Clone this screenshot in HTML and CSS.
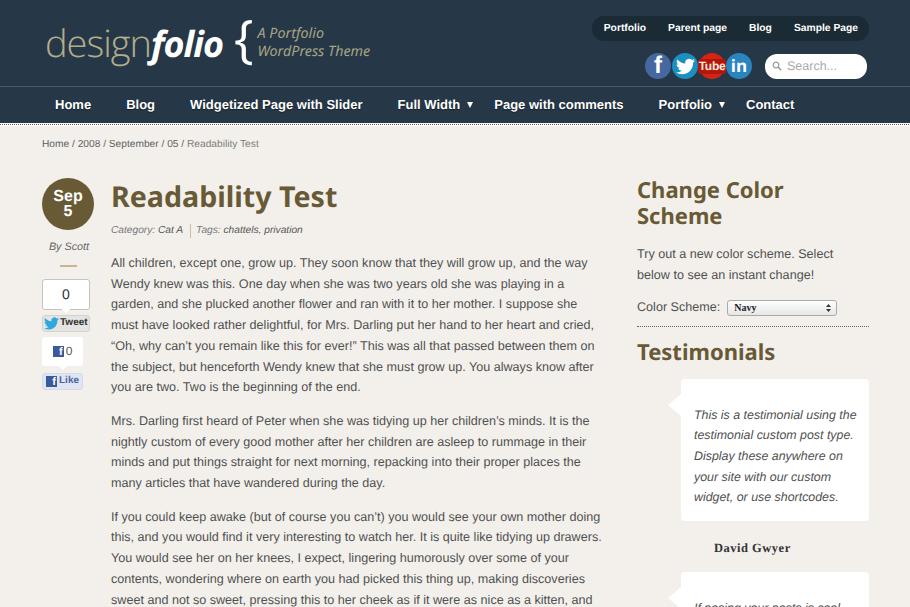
FILE: index.html
```html
<!DOCTYPE html>
<html lang="en">
<head>
    <meta charset="UTF-8">
    <meta name="viewport" content="width=device-width, initial-scale=1.0">
    <title>Readability Test | designfolio</title>
    <link rel="stylesheet" href="styles.css">
</head>
<body>
    <header class="site-header">
        <div class="brand">
            <div class="logo"><span class="logo-light">design</span><span class="logo-bold">folio</span></div>
            <div class="brace">{</div>
            <div class="tagline">A Portfolio<br>WordPress Theme</div>
        </div>
        <div class="header-right">
            <ul class="top-menu">
                <li>Portfolio</li>
                <li>Parent page</li>
                <li>Blog</li>
                <li>Sample Page</li>
            </ul>
            <div class="header-tools">
                <div class="social">
                    <span class="social-icon fb">f</span>
                    <span class="social-icon tw">
                        <svg width="19" height="19" viewBox="0 0 24 24"><path fill="#fff" d="M23.953 4.57a10 10 0 01-2.825.775 4.958 4.958 0 002.163-2.723c-.951.555-2.005.959-3.127 1.184a4.92 4.92 0 00-8.384 4.482C7.69 8.095 4.067 6.13 1.64 3.162a4.822 4.822 0 00-.666 2.475c0 1.71.87 3.213 2.188 4.096a4.904 4.904 0 01-2.228-.616v.06a4.923 4.923 0 003.946 4.827 4.996 4.996 0 01-2.212.085 4.936 4.936 0 004.604 3.417 9.867 9.867 0 01-6.102 2.105c-.39 0-.779-.023-1.17-.067a13.995 13.995 0 007.557 2.209c9.053 0 13.998-7.496 13.998-13.985 0-.21 0-.42-.015-.63A9.935 9.935 0 0024 4.59z"/></svg>
                    </span>
                    <span class="social-icon yt"><span class="yt-label">Tube</span></span>
                    <span class="social-icon in">in</span>
                </div>
                <div class="search">
                    <svg width="10" height="10" viewBox="0 0 10 10"><circle cx="4" cy="4" r="2.8" fill="none" stroke="#999" stroke-width="1.2"/><path d="M6 6l3.2 3.2" stroke="#999" stroke-width="1.6"/></svg>
                    <span>Search...</span>
                </div>
            </div>
        </div>
    </header>

    <nav class="main-nav">
        <a>Home</a>
        <a>Blog</a>
        <a>Widgetized Page with Slider</a>
        <a>Full Width<span class="arrow"></span></a>
        <a>Page with comments</a>
        <a>Portfolio<span class="arrow"></span></a>
        <a>Contact</a>
    </nav>
    <div class="nav-rule"></div>

    <div class="breadcrumbs"><span>Home / 2008 / September / 05 /</span> <span class="current">Readability Test</span></div>

    <div class="layout">
        <aside class="post-side">
            <div class="date-badge">Sep<br>5</div>
            <div class="author">By Scott</div>
            <div class="short-rule"></div>
            <div class="count-box tweet-count">0</div>
            <div class="share-btn tweet-btn">
                <svg width="15" height="15" viewBox="0 0 24 24"><path fill="#2fa8e0" d="M23.953 4.57a10 10 0 01-2.825.775 4.958 4.958 0 002.163-2.723c-.951.555-2.005.959-3.127 1.184a4.92 4.92 0 00-8.384 4.482C7.69 8.095 4.067 6.13 1.64 3.162a4.822 4.822 0 00-.666 2.475c0 1.71.87 3.213 2.188 4.096a4.904 4.904 0 01-2.228-.616v.06a4.923 4.923 0 003.946 4.827 4.996 4.996 0 01-2.212.085 4.936 4.936 0 004.604 3.417 9.867 9.867 0 01-6.102 2.105c-.39 0-.779-.023-1.17-.067a13.995 13.995 0 007.557 2.209c9.053 0 13.998-7.496 13.998-13.985 0-.21 0-.42-.015-.63A9.935 9.935 0 0024 4.59z"/></svg>
                Tweet
            </div>
            <div class="count-box fb-count"><span class="fb-square">f</span>0</div>
            <div class="share-btn like-btn"><span class="fb-square">f</span>Like</div>
        </aside>

        <main class="post">
            <h1>Readability Test</h1>
            <div class="post-meta"><span class="meta-cat">Category: <b>Cat A</b></span><span class="meta-tags">Tags: <b>chattels, privation</b></span></div>
            <p>All children, except one, grow up. They soon know that they will grow up, and the way Wendy knew was this. One day when she was two years old she was playing in a garden, and she plucked another flower and ran with it to her mother. I suppose she must have looked rather delightful, for Mrs. Darling put her hand to her heart and cried, “Oh, why can’t you remain like this for ever!” This was all that passed between them on the subject, but henceforth Wendy knew that she must grow up. You always know after you are two. Two is the beginning of the end.</p>
            <p>Mrs. Darling first heard of Peter when she was tidying up her children’s minds. It is the nightly custom of every good mother after her children are asleep to rummage in their minds and put things straight for next morning, repacking into their proper places the many articles that have wandered during the day.</p>
            <p>If you could keep awake (but of course you can’t) you would see your own mother doing this, and you would find it very interesting to watch her. It is quite like tidying up drawers. You would see her on her knees, I expect, lingering humorously over some of your contents, wondering where on earth you had picked this thing up, making discoveries sweet and not so sweet, pressing this to her cheek as if it were as nice as a kitten, and hurriedly stowing that out of sight.</p>
        </main>

        <aside class="sidebar">
            <section class="widget color-widget">
                <h2>Change Color Scheme</h2>
                <p>Try out a new color scheme. Select below to see an instant change!</p>
                <div class="scheme-row">
                    <label for="scheme">Color Scheme:</label>
                    <div class="select-wrap">
                        <select id="scheme"><option>Navy</option></select>
                        <svg class="select-arrows" width="5" height="8" viewBox="0 0 5 8"><path d="M2.5 0L5 3H0zM2.5 8L0 5h5z" fill="#333"/></svg>
                    </div>
                </div>
            </section>
            <section class="widget">
                <h2>Testimonials</h2>
                <blockquote class="testimonial">This is a testimonial using the testimonial custom post type. Display these anywhere on your site with our custom widget, or use shortcodes.</blockquote>
                <div class="cite">David Gwyer</div>
                <blockquote class="testimonial">If posing your posts is cool and you want to do more.</blockquote>
            </section>
        </aside>
    </div>
</body>
</html>
```

FILE: styles.css
```css
* {
    box-sizing: border-box;
}
html, body {
    height: 607px;
    overflow: hidden;
}
body {
    margin: 0;
    background: #f3f0ec;
    color: #505050;
    font-family: "Liberation Sans", Arial, sans-serif;
    font-size: 12.6px;
    line-height: 20.7px;
    text-rendering: geometricPrecision;
}
.site-header {
    height: 87px;
    background: #263847;
    border-bottom: 1px solid #4b5a66;
    display: flex;
    justify-content: space-between;
    padding: 16px 41px 0 45px;
}
.brand {
    display: flex;
    align-items: flex-start;
}
.logo {
    font-size: 38px;
    line-height: 52px;
    letter-spacing: -1px;
    margin-top: 1px;
}
.logo-light {
    font-family: "Open Sans", sans-serif;
    font-weight: 300;
    color: #b3ad8b;
}
.logo-bold {
    font-family: "Noto Sans", sans-serif;
    font-weight: 700;
    font-style: italic;
    font-size: 36px;
    color: #fff;
}
.brace {
    font-family: "Open Sans", sans-serif;
    font-weight: 400;
    font-size: 52px;
    line-height: 50px;
    color: #fff;
    margin: -3px 4px 0 11px;
}
.tagline {
    font-family: "Noto Sans", sans-serif;
    font-style: italic;
    font-size: 14.3px;
    line-height: 18px;
    color: #a8a586;
    margin-top: 9px;
}
.header-right {
    display: flex;
    flex-direction: column;
    align-items: flex-end;
}
.top-menu {
    list-style: none;
    margin: 0;
    padding: 1px 11px 0 12px;
    height: 25px;
    background: #1b2b36;
    border-radius: 12px;
    display: flex;
    align-items: center;
    gap: 22px;
    color: #fff;
    font-size: 10.3px;
    font-weight: 700;
}
.header-tools {
    display: flex;
    align-items: center;
    margin-top: 12px;
    padding-right: 2px;
}
.social {
    display: flex;
    gap: 1px;
    margin-right: 13px;
}
.social-icon {
    width: 26px;
    height: 26px;
    border-radius: 50%;
    color: #fff;
    display: flex;
    align-items: center;
    justify-content: center;
    font-weight: 700;
}
.fb {
    background: #44689f;
    font-size: 24px;
}
.tw {
    background: #1a8fc0;
}
.yt {
    background: #d52414;
}
.yt-label {
    background: #b3170c;
    color: #f8e6da;
    font-family: "Liberation Sans Narrow", "Liberation Sans", sans-serif;
    font-size: 12px;
    line-height: 15px;
    padding: 0 1px;
    border-radius: 3px;
    letter-spacing: -0.3px;
}
.in {
    background: #2a84bf;
    font-family: "Open Sans", sans-serif;
    font-size: 17px;
}
.search {
    width: 102px;
    height: 25px;
    background: #fff;
    border-radius: 12px;
    display: flex;
    align-items: center;
    gap: 5px;
    padding-left: 7px;
    color: #aaa;
    font-size: 12.5px;
}
.main-nav {
    height: 36px;
    background: #263847;
    display: flex;
    align-items: center;
    gap: 35px;
    padding-left: 55px;
    color: #fff;
    font-size: 13px;
    font-weight: 700;
    white-space: nowrap;
    text-shadow: 0 1px 1px rgba(0,0,0,0.5);
}
.arrow {
    display: inline-block;
    margin: 0 -14px 1px 7px;
    border-top: 6px solid #fff;
    border-left: 3.5px solid transparent;
    border-right: 3.5px solid transparent;
}
.nav-rule {
    height: 3px;
    border-top: 1px solid #fff;
    border-bottom: 1px solid #fff;
    background: repeating-linear-gradient(90deg, #555 0 1px, #fff 1px 2px);
}
.breadcrumbs {
    margin: 11px 0 0 42px;
    font-size: 10.2px;
    line-height: 16px;
    color: #5f5f5f;
}
.current {
    color: #7c7c78;
}
.layout {
    display: flex;
    padding: 25px 41px 0 42px;
}
.post-side {
    width: 52px;
    flex: none;
    margin-right: 17px;
}
.date-badge {
    width: 52px;
    height: 52px;
    border-radius: 50%;
    background: #695a36;
    color: #fff;
    font-size: 16px;
    line-height: 15px;
    font-weight: 700;
    text-align: center;
    padding-top: 11px;
}
.author {
    margin-top: 7px;
    padding-left: 2px;
    font-size: 10.8px;
    font-style: italic;
    text-align: center;
    color: #666;
}
.short-rule {
    width: 17px;
    height: 2px;
    background: #c9b68e;
    margin: 7px auto 12px;
}
.count-box {
    background: #fff;
    border-radius: 3px;
    display: flex;
    align-items: center;
    justify-content: center;
    color: #333;
    position: relative;
}
.count-box::after {
    content: "";
    position: absolute;
    left: 50%;
    bottom: -3px;
    margin-left: -3px;
    width: 6px;
    height: 6px;
    background: #fff;
    transform: rotate(45deg);
}
.tweet-count {
    width: 48px;
    height: 31px;
    border: 1px solid #c4c4c4;
    font-size: 14px;
}
.share-btn {
    height: 17px;
    border-radius: 3px;
    display: flex;
    align-items: center;
    font-size: 10px;
    font-weight: 700;
}
.tweet-btn {
    width: 48px;
    margin-top: 5px;
    background: #e4e4e2;
    border: 1px solid #d2d2d0;
    padding-left: 1px;
    gap: 1px;
    color: #333;
}
.fb-count {
    width: 41px;
    height: 29px;
    margin-top: 5px;
    gap: 2px;
    font-size: 12px;
    color: #555;
}
.fb-square {
    width: 11px;
    height: 11px;
    background: #3b5a9a;
    color: #fff;
    font-size: 11px;
    line-height: 12px;
    font-weight: 700;
    text-align: right;
    padding-right: 1px;
    overflow: hidden;
}
.like-btn {
    width: 41px;
    margin-top: 7px;
    background: #dfe5f2;
    border: 1px solid #d4dae8;
    padding-left: 3px;
    gap: 2px;
    color: #4a63a0;
}
.post {
    width: 493px;
    flex: none;
    margin-right: 33px;
}
h1 {
    margin: 0;
    font-family: "Noto Sans", sans-serif;
    font-size: 28.6px;
    line-height: 38px;
    font-weight: 700;
    color: #695a36;
}
.post-meta {
    margin-top: 8px;
    font-size: 10.2px;
    line-height: 14px;
    font-style: italic;
    color: #777;
    display: flex;
}
.post-meta b {
    font-weight: 400;
    color: #555;
}
.meta-cat {
    padding-right: 7px;
    border-right: 1px solid #cbbf9f;
    margin-right: 5px;
}
.post p {
    margin: 13px 0 0;
}
.post-meta + p {
    margin-top: 15px;
}
.sidebar {
    width: 232px;
    flex: none;
}
.sidebar h2 {
    margin: 0;
    font-family: "Noto Sans", sans-serif;
    font-size: 22px;
    line-height: 25.5px;
    font-weight: 700;
    color: #695a36;
}
.color-widget {
    border-bottom: 1px dotted #666;
    padding-bottom: 8px;
}
.color-widget p {
    margin: 15px 0 0;
}
.scheme-row {
    margin-top: 12px;
    display: flex;
    align-items: center;
    gap: 7px;
}
.select-wrap {
    position: relative;
    display: flex;
}
.select-wrap select {
    appearance: none;
    width: 110px;
    height: 16px;
    padding: 0 6px;
    border: 1px solid #aaa;
    border-radius: 3px;
    background: linear-gradient(#fff, #e6e6e6);
    font-family: "Liberation Serif", serif;
    font-size: 10px;
    font-weight: 700;
    color: #222;
}
.select-arrows {
    position: absolute;
    right: 6px;
    top: 4px;
}
.widget + .widget {
    margin-top: 13px;
}
.testimonial {
    margin: 13px 0 0 44px;
    padding: 26px 8px 13px 13px;
    background: #fff;
    border-radius: 4px;
    font-size: 12.4px;
    font-style: italic;
    position: relative;
}
.testimonial::before {
    content: "";
    position: absolute;
    left: -13px;
    top: 15px;
    border-top: 11px solid transparent;
    border-bottom: 11px solid transparent;
    border-right: 13px solid #fff;
}
.cite {
    margin: 17px 0 0 77px;
    font-family: "Liberation Serif", serif;
    font-size: 12.5px;
    font-weight: 700;
    letter-spacing: 0.5px;
    color: #333;
}
.cite + .testimonial {
    margin-top: 13px;
}
```
